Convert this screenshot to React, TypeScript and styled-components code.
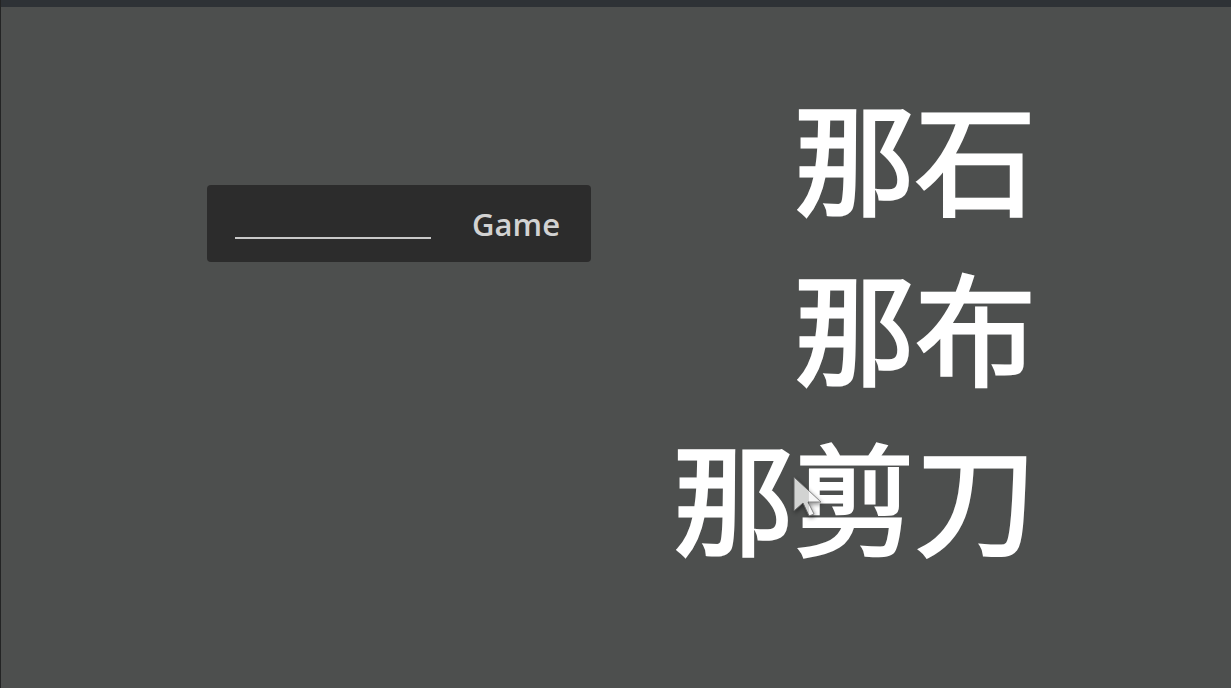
import React from "react";
import styled, { createGlobalStyle } from "styled-components";

const Global = createGlobalStyle`
  html, body { margin: 0; padding: 0; }
  body {
    width: 1231px;
    height: 688px;
    overflow: hidden;
    background: #4d4f4e;
    font-family: "Open Sans", "Noto Sans", sans-serif;
  }
`;

const Window = styled.div`
  position: relative;
  width: 1231px;
  height: 688px;
  display: flex;
  flex-direction: column;
  background: #4d4f4e;
  border-left: 1px solid #232424;
  box-sizing: border-box;
`;

const TitleBar = styled.div`
  height: 7px;
  flex: none;
  background: #2e3236;
`;

const Stage = styled.div`
  flex: 1;
  display: flex;
  align-items: flex-start;
`;

const LeftColumn = styled.div`
  padding-left: 206px;
  padding-top: 178px;
`;

const Panel = styled.div`
  width: 384px;
  height: 77px;
  box-sizing: border-box;
  background: #2c2c2c;
  border-radius: 4px;
  display: flex;
  align-items: center;
  padding: 0 31px 0 28px;
  gap: 41px;
`;

const Blank = styled.div`
  width: 199px;
  height: 2px;
  background: #c9c9c9;
  margin-top: 28px;
`;

const Label = styled.span`
  color: #d2d2d2;
  font-family: "Open Sans", "Noto Sans", sans-serif;
  font-size: 31px;
  font-weight: 600;
  line-height: 1;
  margin-top: 1px;
`;

const RightColumn = styled.div`
  margin-left: auto;
  padding-right: 195px;
  padding-top: 62px;
  display: flex;
  flex-direction: column;
  align-items: flex-end;
`;

const Choice = styled.div`
  color: #ffffff;
  font-family: "Noto Sans CJK SC", "Noto Sans CJK TC", sans-serif;
  font-size: 121px;
  font-weight: 400;
  -webkit-text-stroke: 3px #ffffff;
  line-height: 170px;
  white-space: nowrap;
`;

const Pointer = styled.svg`
  position: absolute;
  left: 792px;
  top: 476px;
  opacity: 0.8;
  filter: drop-shadow(1px 2px 2px rgba(0, 0, 0, 0.55));
`;

export default function App() {
  return (
    <>
      <Global />
      <Window>
        <TitleBar />
        <Stage>
          <LeftColumn>
            <Panel>
              <Blank />
              <Label>Game</Label>
            </Panel>
          </LeftColumn>
          <RightColumn>
            <Choice>那石</Choice>
            <Choice>那布</Choice>
            <Choice>那剪刀</Choice>
          </RightColumn>
        </Stage>
        <Pointer width="32" height="44" viewBox="0 0 32 44">
          <path d="M1 1 L1 35 L10 27 L16 40 L21 38 L15 26 L28 26 Z" fill="#f4f4f4" stroke="#666" strokeWidth="1" />
        </Pointer>
      </Window>
    </>
  );
}
